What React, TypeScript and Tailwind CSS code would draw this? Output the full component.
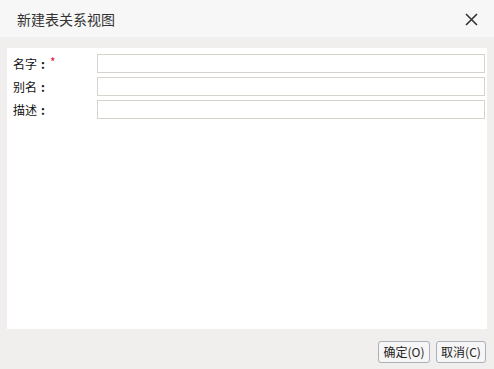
export default function App() {
  const font = { fontFamily: '"Noto Sans CJK SC", "Noto Sans", sans-serif' };
  const rows = [
    { label: '名字', required: true },
    { label: '别名', required: false },
    { label: '描述', required: false },
  ];
  return (
    <div className="w-[494px] h-[369px] bg-[#f0efed] flex flex-col text-[#222]" style={font}>
      <div className="h-[37px] bg-[#f7f7f7] flex items-center justify-between pl-[17px] pr-[16px] shrink-0">
        <span className="text-[14px] text-[#333] leading-none">新建表关系视图</span>
        <svg width="13" height="13" viewBox="0 0 13 13" className="mt-[1px]">
          <path d="M1 1L12 12M12 1L1 12" stroke="#333" strokeWidth="1.6" />
        </svg>
      </div>
      <div className="mt-[11px] mx-[7px] h-[281px] bg-white pt-[6px] pl-[6px] pr-[2px] flex flex-col gap-[4px]">
        {rows.map((r) => (
          <div key={r.label} className="flex items-center h-[19px]">
            <div className="w-[84px] text-[12px] leading-none flex items-center text-[#111]">
              {r.label}
              <span className="ml-[4px] font-bold">:</span>
              {r.required && <span className="text-[#e0203a] text-[12px] ml-[5px] -mt-[3px]">*</span>}
            </div>
            <input className="flex-1 h-[19px] border border-[#d6d3cd] bg-white outline-none" />
          </div>
        ))}
      </div>
      <div className="flex justify-end gap-[6px] pr-[8px] mt-[12px]">
        <button className="h-[22px] w-[52px] border border-[#a9b0ba] rounded-[3px] bg-[#f6f6f6] text-[12px] leading-none text-[#222]">
          确定(O)
        </button>
        <button className="h-[22px] w-[50px] border border-[#a9b0ba] rounded-[3px] bg-[#f6f6f6] text-[12px] leading-none text-[#222]">
          取消(C)
        </button>
      </div>
    </div>
  );
}
